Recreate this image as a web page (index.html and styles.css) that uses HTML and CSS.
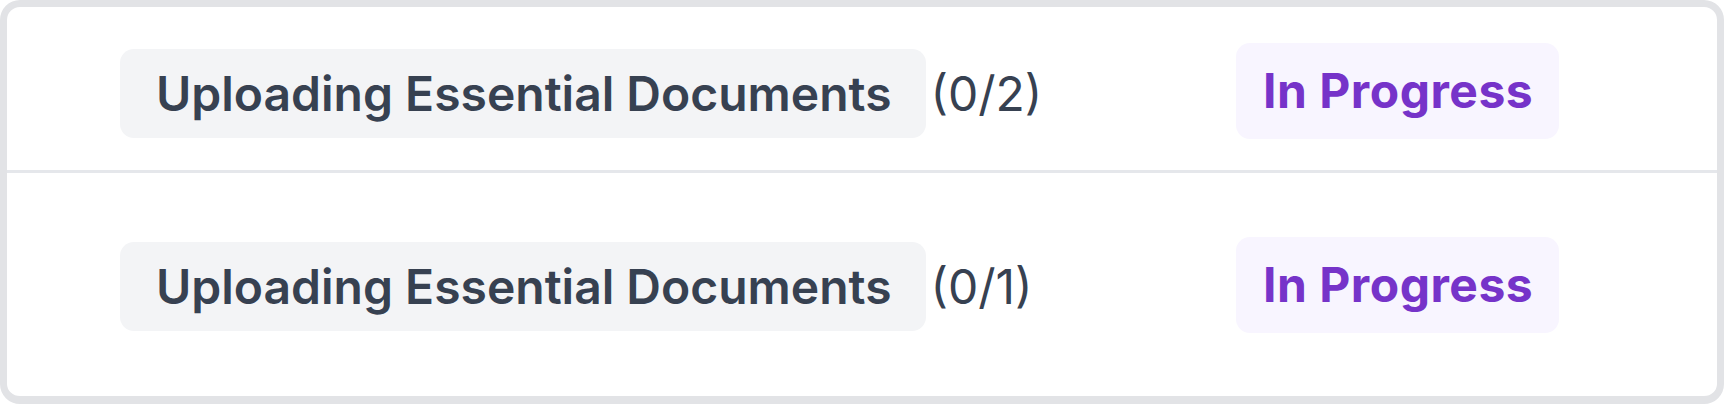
FILE: index.html
```html
<!DOCTYPE html>
<html lang="en">
<head>
<meta charset="utf-8">
<title>Tasks</title>
<link rel="stylesheet" href="styles.css">
</head>
<body>
<div class="card">
  <div class="row row-first">
    <div class="name-cell">
      <span class="task-pill">Uploading Essential Documents</span>
      <span class="count">(0/2)</span>
    </div>
    <span class="status-pill">In Progress</span>
  </div>
  <div class="row row-last">
    <div class="name-cell">
      <span class="task-pill">Uploading Essential Documents</span>
      <span class="count">(0/1)</span>
    </div>
    <span class="status-pill">In Progress</span>
  </div>
</div>
</body>
</html>
```

FILE: styles.css
```css
html, body {
  margin: 0;
  padding: 0;
  background: #ffffff;
}

body {
  font-family: Inter, "Noto Sans", "Liberation Sans", sans-serif;
  width: 1724px;
  height: 404px;
  overflow: hidden;
}

.card {
  box-sizing: border-box;
  width: 1724px;
  height: 404px;
  border: 7px solid #e2e3e6;
  border-bottom-width: 8px;
  border-radius: 20px;
  background: #ffffff;
  display: flex;
  flex-direction: column;
}

.row {
  display: flex;
  align-items: center;
  padding-left: 113px;
}

.row-first {
  height: 166px;
  padding-top: 5px;
  box-sizing: border-box;
  border-bottom: 3px solid #e5e7eb;
}

.row-last {
  flex: 1;
}

.name-cell {
  width: 1116px;
  display: flex;
  align-items: center;
  padding-top: 4px;
}

.task-pill {
  display: inline-block;
  background: #f3f4f6;
  color: #374151;
  font-size: 48px;
  font-weight: 600;
  line-height: 57px;
  padding: 16px 34px 16px 36px;
  border-radius: 14px;
  white-space: nowrap;
}

.count {
  margin-left: 5px;
  color: #374151;
  font-size: 48px;
  font-weight: 400;
  line-height: 57px;
  white-space: nowrap;
}

.status-pill {
  display: inline-block;
  background: #f8f5ff;
  color: #7633c9;
  font-size: 48px;
  font-weight: 700;
  line-height: 57px;
  letter-spacing: 0.5px;
  padding: 19px 26px 20px 27px;
  border-radius: 14px;
  white-space: nowrap;
}
```
